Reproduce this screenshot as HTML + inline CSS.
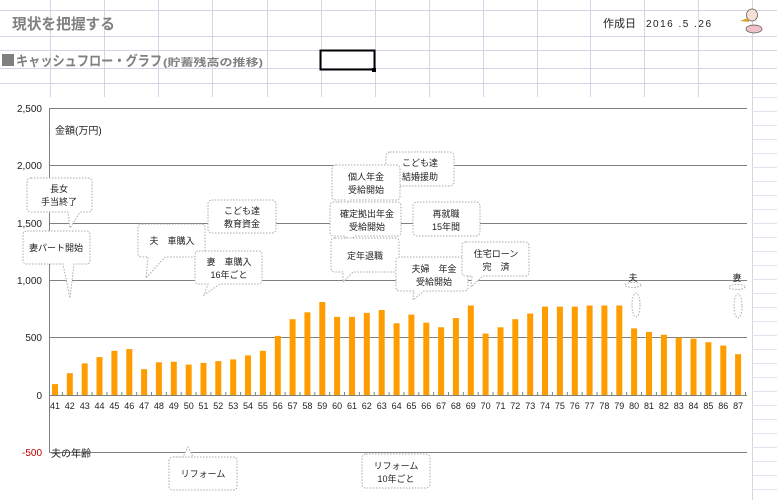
<!DOCTYPE html>
<html><head><meta charset="utf-8"><style>
body{margin:0;width:777px;height:500px;overflow:hidden;background:#fff;font-family:"Liberation Sans","Noto Sans CJK JP",sans-serif;}
</style></head><body>
<svg width="777" height="500" xmlns="http://www.w3.org/2000/svg" style="position:absolute;left:0;top:0">
<g stroke="#d8d4e8" stroke-width="1">
<line x1="0" y1="10.5" x2="777" y2="10.5"/><line x1="0" y1="36.5" x2="777" y2="36.5"/>
<line x1="0" y1="50.5" x2="777" y2="50.5"/><line x1="0" y1="68.5" x2="777" y2="68.5"/>
<line x1="0" y1="83.5" x2="777" y2="83.5"/>
<line x1="50.5" y1="0" x2="50.5" y2="97"/><line x1="104.5" y1="0" x2="104.5" y2="97"/>
<line x1="158.5" y1="0" x2="158.5" y2="97"/><line x1="212.5" y1="0" x2="212.5" y2="97"/>
<line x1="267.5" y1="0" x2="267.5" y2="97"/><line x1="321.5" y1="0" x2="321.5" y2="97"/>
<line x1="375.5" y1="0" x2="375.5" y2="97"/><line x1="429.5" y1="0" x2="429.5" y2="97"/>
<line x1="483.5" y1="0" x2="483.5" y2="97"/><line x1="537.5" y1="0" x2="537.5" y2="97"/>
<line x1="590.5" y1="0" x2="590.5" y2="97"/><line x1="644.5" y1="0" x2="644.5" y2="97"/>
<line x1="698.5" y1="0" x2="698.5" y2="97"/><line x1="752.5" y1="0" x2="752.5" y2="500"/>
</g>
<g stroke="#e4e2ee" stroke-width="1">
<line x1="752" y1="97.5" x2="777" y2="97.5"/><line x1="752" y1="111.5" x2="777" y2="111.5"/>
<line x1="752" y1="125.5" x2="777" y2="125.5"/><line x1="752" y1="139.5" x2="777" y2="139.5"/>
<line x1="752" y1="153.5" x2="777" y2="153.5"/><line x1="752" y1="167.5" x2="777" y2="167.5"/>
<line x1="752" y1="181.5" x2="777" y2="181.5"/><line x1="752" y1="195.5" x2="777" y2="195.5"/>
<line x1="752" y1="209.5" x2="777" y2="209.5"/><line x1="752" y1="223.5" x2="777" y2="223.5"/>
<line x1="752" y1="237.5" x2="777" y2="237.5"/><line x1="752" y1="251.5" x2="777" y2="251.5"/>
<line x1="752" y1="265.5" x2="777" y2="265.5"/><line x1="752" y1="279.5" x2="777" y2="279.5"/>
<line x1="752" y1="293.5" x2="777" y2="293.5"/><line x1="752" y1="307.5" x2="777" y2="307.5"/>
<line x1="752" y1="321.5" x2="777" y2="321.5"/><line x1="752" y1="335.5" x2="777" y2="335.5"/>
<line x1="752" y1="349.5" x2="777" y2="349.5"/><line x1="752" y1="363.5" x2="777" y2="363.5"/>
<line x1="752" y1="377.5" x2="777" y2="377.5"/><line x1="752" y1="391.5" x2="777" y2="391.5"/>
<line x1="752" y1="405.5" x2="777" y2="405.5"/><line x1="752" y1="419.5" x2="777" y2="419.5"/>
<line x1="752" y1="433.5" x2="777" y2="433.5"/><line x1="752" y1="447.5" x2="777" y2="447.5"/>
<line x1="752" y1="461.5" x2="777" y2="461.5"/><line x1="752" y1="475.5" x2="777" y2="475.5"/>
<line x1="752" y1="489.5" x2="777" y2="489.5"/>
<line x1="50.5" y1="490" x2="50.5" y2="500"/><line x1="104.5" y1="490" x2="104.5" y2="500"/>
<line x1="158.5" y1="490" x2="158.5" y2="500"/><line x1="212.5" y1="490" x2="212.5" y2="500"/>
<line x1="267.5" y1="490" x2="267.5" y2="500"/><line x1="321.5" y1="490" x2="321.5" y2="500"/>
<line x1="375.5" y1="490" x2="375.5" y2="500"/><line x1="429.5" y1="490" x2="429.5" y2="500"/>
</g>
<text x="12" y="29" font-size="15" font-weight="bold" fill="#808080" textLength="103" lengthAdjust="spacingAndGlyphs">現状を把握する</text>
<text x="603" y="27" font-size="11" fill="#222">作成日</text>
<text x="646" y="27" font-size="10" fill="#222" letter-spacing="1.5">2016 .5 .26</text>
<g transform="translate(740,5)"><ellipse cx="12" cy="10" rx="5.5" ry="6" fill="#f5e0d8" stroke="#555" stroke-width="0.7"/><path d="M0 16 L8 13 L9 17 Z" fill="#d8a030"/><ellipse cx="14" cy="24" rx="8" ry="4" fill="#f0c0c8" stroke="#555" stroke-width="0.7"/></g>
<rect x="2" y="54" width="12" height="12" fill="#808080"/>
<text x="16" y="66" font-size="14" font-weight="bold" fill="#808080" textLength="146" lengthAdjust="spacingAndGlyphs">キャッシュフロー・グラフ</text>
<text x="163" y="66" font-size="10" font-weight="bold" fill="#808080" textLength="100" lengthAdjust="spacingAndGlyphs">(貯蓄残高の推移)</text>
<rect x="320.5" y="50.5" width="54" height="19" fill="none" stroke="#000" stroke-width="2"/>
<rect x="372" y="68" width="4" height="4" fill="#000"/>
<rect x="0" y="97" width="752" height="403" fill="#fff"/>
<g stroke="#808080" stroke-width="1">
<line x1="49" y1="108.5" x2="747" y2="108.5"/><line x1="49" y1="165.5" x2="747" y2="165.5"/>
<line x1="49" y1="223.5" x2="747" y2="223.5"/><line x1="49" y1="280.5" x2="747" y2="280.5"/>
<line x1="49" y1="337.5" x2="747" y2="337.5"/><line x1="49" y1="395.5" x2="747" y2="395.5"/>
<line x1="49" y1="452.5" x2="747" y2="452.5"/><line x1="49.5" y1="108" x2="49.5" y2="452"/>
</g>
<g font-size="10" fill="#222" text-anchor="end">
<text x="42" y="112">2,500</text><text x="42" y="169">2,000</text><text x="42" y="227">1,500</text>
<text x="42" y="284">1,000</text><text x="42" y="341">500</text><text x="42" y="399">0</text>
<text x="42" y="456" fill="#c00000">-500</text></g>
<text x="55" y="134" font-size="10" fill="#222">金額(万円)</text>
<text x="51" y="457" font-size="10" fill="#222">夫の年齢</text>
<g id="bars" fill="#ff9d00"></g>
<g id="labs" font-size="9" fill="#222" text-anchor="middle"></g>
<g fill="#fff" stroke="#aaa" stroke-width="1" stroke-dasharray="1.5,1.5" font-size="9">
<path d="M31 178 h57 q4 0 4 4 v26 q0 4 -4 4 h-8 l-10 16 l-2 -16 h-37 q-4 0 -4 -4 v-26 q0 -4 4 -4z"/>
<path d="M27 231 h59 q4 0 4 4 v25 q0 4 -4 4 h-12 l-4 34 l-7 -34 h-36 q-4 0 -4 -4 v-25 q0 -4 4 -4z"/>
<path d="M142 224 h59 q4 0 4 4 v25 q0 4 -4 4 h-36 l-19 21 l2 -21 h-6 q-4 0 -4 -4 v-25 q0 -4 4 -4z"/>
<rect x="208" y="200" width="68" height="33" rx="4"/>
<path d="M199 251 h59 q4 0 4 4 v25 q0 4 -4 4 h-38 l-16 11 l4 -11 h-9 q-4 0 -4 -4 v-25 q0 -4 4 -4z"/>
<rect x="386" y="152" width="68" height="34" rx="4"/>
<path d="M336 165 h60 q4 0 4 4 v27 q0 4 -4 4 h-46 l-5 4 l0 -4 h-9 q-4 0 -4 -4 v-27 q0 -4 4 -4z"/>
<path d="M338 202 h59 q4 0 4 4 v26 q0 4 -4 4 h-41 l-8 4 l-3 -4 h-11 q-4 0 -4 -4 v-26 q0 -4 4 -4z"/>
<rect x="413" y="202" width="67" height="34" rx="4"/>
<path d="M335 238 h60 q4 0 4 4 v26 q0 4 -4 4 h-42 l-10 10 l0 -10 h-8 q-4 0 -4 -4 v-26 q0 -4 4 -4z"/>
<path d="M404 257 h60 q4 0 4 4 v26 q0 4 -4 4 h-40 l-11 9 l1 -9 h-14 q-4 0 -4 -4 v-26 q0 -4 4 -4z"/>
<path d="M466 242 h59 q4 0 4 4 v26 q0 4 -4 4 h-42 l-12 11 l1 -11 h-6 q-4 0 -4 -4 v-26 q0 -4 4 -4z"/>
<path d="M173 457 h60 q4 0 4 4 v25 q0 4 -4 4 h-60 q-4 0 -4 -4 v-25 q0 -4 4 -4 h10 l5 -10 l5 10z"/>
<rect x="362" y="454" width="68" height="34" rx="4"/>
<ellipse cx="633" cy="285" rx="8" ry="2.5"/><ellipse cx="636" cy="305" rx="4" ry="12"/>
<ellipse cx="737" cy="287" rx="8" ry="2.5"/><ellipse cx="738" cy="306" rx="4" ry="12"/>
</g>
<g font-size="9" fill="#222" text-anchor="middle">
<text x="59" y="192">長女</text><text x="59" y="205">手当終了</text>
<text x="56" y="251">妻パート開始</text>
<text x="172" y="244">夫　車購入</text>
<text x="242" y="214">こども達</text><text x="242" y="227">教育資金</text>
<text x="229" y="265">妻　車購入</text><text x="229" y="278">16年ごと</text>
<text x="420" y="166">こども達</text><text x="420" y="180">結婚援助</text>
<text x="366" y="180">個人年金</text><text x="366" y="193">受給開始</text>
<text x="367" y="217">確定拠出年金</text><text x="367" y="230">受給開始</text>
<text x="446" y="217">再就職</text><text x="446" y="230">15年間</text>
<text x="365" y="259">定年退職</text>
<text x="434" y="272">夫婦　年金</text><text x="434" y="285">受給開始</text>
<text x="496" y="257">住宅ローン</text><text x="496" y="270">完　済</text>
<text x="203" y="477">リフォーム</text>
<text x="396" y="469">リフォーム</text><text x="396" y="482">10年ごと</text>
<text x="633" y="281">夫</text><text x="737" y="281">妻</text>
</g>
</svg>
<script>
var v=[95,190,275,330,385,400,225,285,290,265,280,295,310,345,385,515,660,720,810,680,680,715,740,625,700,630,590,670,780,535,590,660,710,770,770,770,780,780,780,580,550,525,500,490,460,430,355];
var ns="http://www.w3.org/2000/svg",b=document.getElementById('bars'),l=document.getElementById('labs');
v.forEach(function(h,i){var x=55+14.85*i;var r=document.createElementNS(ns,'rect');var hh=h*0.1148;
r.setAttribute('x',(x-3).toFixed(1));r.setAttribute('y',(395-hh).toFixed(1));r.setAttribute('width','6');r.setAttribute('height',hh.toFixed(1));b.appendChild(r);
var t=document.createElementNS(ns,'text');t.setAttribute('x',x.toFixed(1));t.setAttribute('y','409');t.textContent=41+i;l.appendChild(t);
var k=document.createElementNS(ns,'line');k.setAttribute('x1',(x+7.4).toFixed(1));k.setAttribute('x2',(x+7.4).toFixed(1));k.setAttribute('y1','392');k.setAttribute('y2','396');k.setAttribute('stroke','#808080');b.appendChild(k);});
</script>
</body></html>
